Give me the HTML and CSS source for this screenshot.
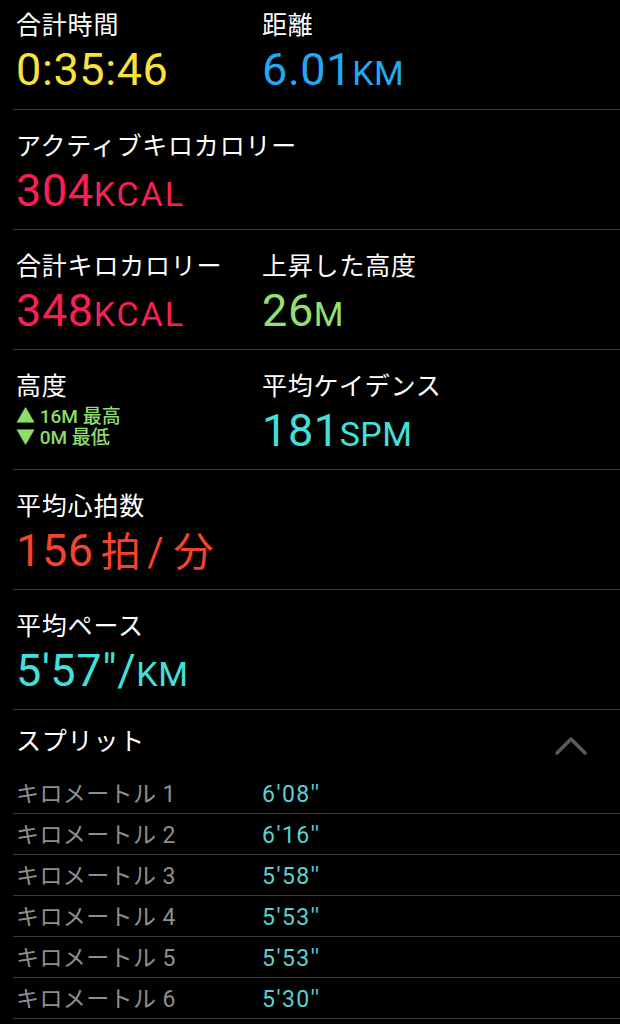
FILE: index.html
```html
<!DOCTYPE html>
<html lang="ja">
<head>
    <meta charset="UTF-8">
    <meta name="viewport" content="width=device-width, initial-scale=1.0">
    <title>ワークアウト</title>
    <link rel="stylesheet" href="styles.css">
</head>
<body>
    <main class="workout">
        <!-- summary rows -->
        <section class="stat-row first">
            <div class="stat">
                <div class="label">合計時間</div>
                <div class="value yellow">0:35:46</div>
            </div>
            <div class="stat">
                <div class="label">距離</div>
                <div class="value blue">6.01<span class="unit">KM</span></div>
            </div>
        </section>

        <section class="stat-row">
            <div class="stat wide">
                <div class="label">アクティブキロカロリー</div>
                <div class="value pink">304<span class="unit wide-unit">KCAL</span></div>
            </div>
        </section>

        <section class="stat-row">
            <div class="stat">
                <div class="label">合計キロカロリー</div>
                <div class="value pink">348<span class="unit wide-unit">KCAL</span></div>
            </div>
            <div class="stat">
                <div class="label">上昇した高度</div>
                <div class="value green">26<span class="unit">M</span></div>
            </div>
        </section>

        <section class="stat-row">
            <div class="stat">
                <div class="label">高度</div>
                <div class="elevation">
                    <div>▲ 16M 最高</div>
                    <div>▼ 0M 最低</div>
                </div>
            </div>
            <div class="stat">
                <div class="label">平均ケイデンス</div>
                <div class="value cyan">181<span class="unit">SPM</span></div>
            </div>
        </section>

        <section class="stat-row">
            <div class="stat wide">
                <div class="label">平均心拍数</div>
                <div class="value red">156<span class="cjk-unit">拍</span><span class="slash">/</span><span class="cjk-unit">分</span></div>
            </div>
        </section>

        <section class="stat-row">
            <div class="stat wide">
                <div class="label">平均ペース</div>
                <div class="value cyan">5'57"/<span class="unit">KM</span></div>
            </div>
        </section>

        <!-- splits -->
        <section class="splits">
            <div class="splits-head">
                <div class="label">スプリット</div>
                <svg class="chevron" width="34" height="20" viewBox="0 0 34 20">
                    <polyline points="3,17 17,3 31,17" fill="none" stroke="#5b5b5e" stroke-width="3.5" stroke-linecap="round" stroke-linejoin="round"/>
                </svg>
            </div>
            <div class="split"><span class="split-name">キロメートル 1</span><span class="split-time">6'08''</span></div>
            <div class="split"><span class="split-name">キロメートル 2</span><span class="split-time">6'16''</span></div>
            <div class="split"><span class="split-name">キロメートル 3</span><span class="split-time">5'58''</span></div>
            <div class="split"><span class="split-name">キロメートル 4</span><span class="split-time">5'53''</span></div>
            <div class="split"><span class="split-name">キロメートル 5</span><span class="split-time">5'53''</span></div>
            <div class="split"><span class="split-name">キロメートル 6</span><span class="split-time">5'30''</span></div>
        </section>
    </main>
</body>
</html>
```

FILE: styles.css
```css
* {
    margin: 0;
    padding: 0;
    box-sizing: border-box;
}

body {
    background-color: #000;
    color: #fff;
    font-family: Roboto, "Noto Sans CJK JP", sans-serif;
}

.workout {
    width: 620px;
    height: 1024px;
    overflow: hidden;
}

/* one band of stats with the hairline under it */
.stat-row {
    display: grid;
    grid-template-columns: 246px 1fr;
    height: 120px;
    margin-left: 13px;
    padding: 22px 0 0 3px;
    border-bottom: 1px solid #38383a;
}

.stat-row.first {
    height: 110px;
    padding-top: 11px;
}

.stat.wide {
    grid-column: 1 / span 2;
}

.label {
    font-size: 25px;
    line-height: 30px;
    color: #fff;
    letter-spacing: 0.8px;
}

.value {
    margin-top: 6px;
    font-size: 45px;
    line-height: 46px;
    letter-spacing: 0.6px;
}

.unit {
    font-size: 34px;
    letter-spacing: 0.5px;
}

.unit.wide-unit {
    letter-spacing: 2px;
}

.cjk-unit {
    font-size: 40px;
    margin-left: 7px;
}

.slash {
    margin: 0 2px 0 6px;
    font-size: 40px;
}

.yellow { color: #f9e23a; }
.blue { color: #21aaf2; }
.pink { color: #f91f55; }
.green { color: #93e06d; }
.cyan { color: #42e0dd; }
.red { color: #f7432c; }

.elevation {
    margin-top: 4px;
    font-size: 19px;
    line-height: 21px;
    font-weight: 500;
    color: #8edc6c;
}

/* splits list */
.splits {
    margin-left: 13px;
}

.splits-head {
    display: flex;
    justify-content: space-between;
    align-items: flex-start;
    height: 63px;
    padding: 17px 0 0 3px;
}

.chevron {
    margin: 9px 32px 0 0;
}

.split {
    display: flex;
    height: 41px;
    padding: 7px 0 0 3px;
    border-bottom: 1px solid #38383a;
    line-height: 30px;
}

.split-name {
    width: 246px;
    font-size: 23px;
    letter-spacing: 0.4px;
    color: #8e8e91;
}

.split-time {
    font-size: 23px;
    letter-spacing: 1.5px;
    color: #5ad0d4;
}
```
